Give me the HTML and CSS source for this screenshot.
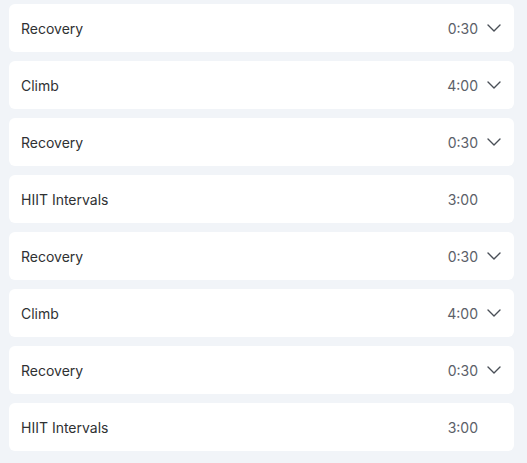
FILE: index.html
```html
<!DOCTYPE html>
<html>
<head>
<meta charset="utf-8">
<link rel="stylesheet" href="styles.css">
</head>
<body>
<div class="list">
  <div class="row"><span class="name">Recovery</span><span class="time">0:30</span><svg class="chev" viewBox="0 0 16 16"><polyline points="2,5 8,11 14,5"/></svg></div>
  <div class="row"><span class="name">Climb</span><span class="time">4:00</span><svg class="chev" viewBox="0 0 16 16"><polyline points="2,5 8,11 14,5"/></svg></div>
  <div class="row"><span class="name">Recovery</span><span class="time">0:30</span><svg class="chev" viewBox="0 0 16 16"><polyline points="2,5 8,11 14,5"/></svg></div>
  <div class="row"><span class="name">HIIT Intervals</span><span class="time">3:00</span><svg class="chev hidden" viewBox="0 0 16 16"><polyline points="2,5 8,11 14,5"/></svg></div>
  <div class="row"><span class="name">Recovery</span><span class="time">0:30</span><svg class="chev" viewBox="0 0 16 16"><polyline points="2,5 8,11 14,5"/></svg></div>
  <div class="row"><span class="name">Climb</span><span class="time">4:00</span><svg class="chev" viewBox="0 0 16 16"><polyline points="2,5 8,11 14,5"/></svg></div>
  <div class="row"><span class="name">Recovery</span><span class="time">0:30</span><svg class="chev" viewBox="0 0 16 16"><polyline points="2,5 8,11 14,5"/></svg></div>
  <div class="row"><span class="name">HIIT Intervals</span><span class="time">3:00</span><svg class="chev hidden" viewBox="0 0 16 16"><polyline points="2,5 8,11 14,5"/></svg></div>
</div>
</body>
</html>
```
FILE: styles.css
```css
html, body {
  margin: 0;
  padding: 0;
  background: #f1f4f8;
  font-family: Inter, "Noto Sans", sans-serif;
}
.list {
  display: flex;
  flex-direction: column;
  gap: 9px;
  padding: 4px 13px 0 9px;
}
.row {
  height: 48px;
  background: #ffffff;
  border-radius: 6px;
  display: flex;
  align-items: center;
  padding: 0 12px;
  box-sizing: border-box;
}
.name {
  flex: 1;
  font-size: 14px;
  color: #2f3133;
}
.time {
  font-size: 14px;
  color: #5b6068;
  margin-right: 8px;
}
.chev {
  width: 16px;
  height: 16px;
  fill: none;
  stroke: #4a4f57;
  stroke-width: 1.4;
  stroke-linecap: round;
  stroke-linejoin: round;
}
.hidden {
  visibility: hidden;
}
```
